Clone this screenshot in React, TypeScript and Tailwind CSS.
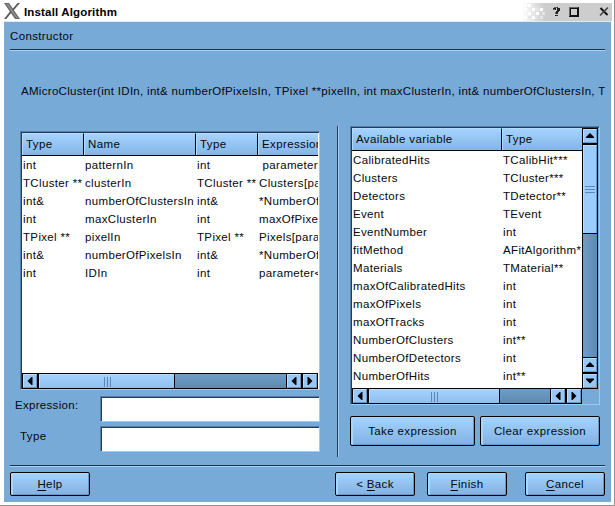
import React from "react";

type Dir = "left" | "right" | "up" | "down";

const SHAPES: Record<Dir, string> = {
  left: "M5 7.5 L9 3.5 H10 V11.5 H9 Z",
  right: "M10 7.5 L6 3.5 H5 V11.5 H6 Z",
  up: "M7.5 4.5 L11.5 8.5 V9.5 H3.5 V8.5 Z",
  down: "M7.5 10 L11.5 6 V5 H3.5 V6 Z",
};

function Arrow({ dir }: { dir: Dir }) {
  return (
    <div className="h-[14px] w-[14px] shrink-0 border border-t-[#b9dcff] border-l-[#b9dcff] border-r-[#6b98c3] border-b-[#6b98c3] bg-[#98c8f8]">
      <svg viewBox="1.5 1.5 12 12" className="block h-[12px] w-[12px]">
        <path d={SHAPES[dir]} fill="#000" />
      </svg>
    </div>
  );
}

function Head({ label, className }: { label: string; className: string }) {
  return (
    <div
      className={
        "h-[22px] shrink-0 overflow-hidden border-t border-l border-[#b4dbff] bg-linear-to-b from-[#a5d3ff] to-[#84b5e6] pl-[3px] leading-[21px] tracking-[0.37px] " +
        className
      }
    >
      {label}
    </div>
  );
}

function Grip({ vertical = false }: { vertical?: boolean }) {
  return vertical ? (
    <div className="flex h-[7px] w-[10px] flex-col justify-between">
      <i className="h-px bg-[#5c88b5]" />
      <i className="h-px bg-[#5c88b5]" />
      <i className="h-px bg-[#5c88b5]" />
    </div>
  ) : (
    <div className="flex h-[10px] w-[7px] justify-between">
      <i className="w-px bg-[#5c88b5]" />
      <i className="w-px bg-[#5c88b5]" />
      <i className="w-px bg-[#5c88b5]" />
    </div>
  );
}

function HBar({ thumb }: { thumb: string }) {
  return (
    <div className="flex h-[16px] shrink-0 border border-black bg-linear-to-b from-[#709dc6] to-[#5e8ab1]">
      <Arrow dir="left" />
      <div className="w-[2px] bg-black" />
      <div
        className={
          "flex h-[14px] items-center justify-center border-t border-l border-[#b9dcff] bg-linear-to-b from-[#a3d2ff] to-[#8fbfef] " +
          thumb
        }
      >
        <Grip />
      </div>
      <div className="w-px bg-black" />
      <div className="ml-auto w-px bg-black" />
      <Arrow dir="left" />
      <div className="w-[2px] bg-black" />
      <Arrow dir="right" />
    </div>
  );
}

function Button({ children, className }: { children: React.ReactNode; className: string }) {
  return (
    <button
      className={
        "shrink-0 rounded-[2px] border border-black bg-linear-to-b from-[#a5d3ff] to-[#81b2e3] pt-[2px] text-center tracking-[0.37px] shadow-[inset_2px_1px_0_#a9d6ff,inset_-1px_-1px_0_#6997c3] " +
        className
      }
    >
      {children}
    </button>
  );
}

const ARGS = [
  ["int", "patternIn", "int", "\u00a0parameter"],
  ["TCluster **", "clusterIn", "TCluster **", "Clusters[parameter"],
  ["int&", "numberOfClustersIn", "int&", "*NumberOfClusters"],
  ["int", "maxClusterIn", "int", "maxOfPixels"],
  ["TPixel **", "pixelIn", "TPixel **", "Pixels[parameter"],
  ["int&", "numberOfPixelsIn", "int&", "*NumberOfPixels"],
  ["int", "IDIn", "int", "parameter<"],
];

const VARS = [
  ["CalibratedHits", "TCalibHit***"],
  ["Clusters", "TCluster***"],
  ["Detectors", "TDetector**"],
  ["Event", "TEvent"],
  ["EventNumber", "int"],
  ["fitMethod", "AFitAlgorithm*"],
  ["Materials", "TMaterial**"],
  ["maxOfCalibratedHits", "int"],
  ["maxOfPixels", "int"],
  ["maxOfTracks", "int"],
  ["NumberOfClusters", "int**"],
  ["NumberOfDetectors", "int"],
  ["NumberOfHits", "int**"],
];

const FRAME =
  "flex flex-col border border-t-[#547da7] border-l-[#547da7] border-r-[#9bcbfa] border-b-[#9bcbfa]";
const INNER = "border-t border-l border-[#263d55] bg-white";

function TitleBar() {
  return (
    <header className="flex h-[21px] shrink-0 items-start pl-[4px]">
      <svg viewBox="0 0 16 16" className="mt-[3px] h-[16px] w-[16px] shrink-0">
        <path d="M0 0 H5 L16 16 H11 Z" fill="#666" />
        <path d="M2 1 H4.3 L14 15 H12 Z" fill="#8c8c8c" />
        <path d="M13.5 0 H16 L9.6 7.4 L8.5 6 Z M6.3 8 L7.5 9.6 L2.3 16 H0 Z" fill="#5c5c5c" />
      </svg>
      <h1 className="mt-[4px] ml-[4px] text-[11.5px] leading-[16px] font-bold tracking-[0.16px] whitespace-nowrap text-black">
        Install Algorithm
      </h1>
      <div className="mt-[3px] mr-[2px] ml-auto flex h-[18px] w-[90px] items-center bg-linear-to-r from-white via-[#cdcdcd] via-25% to-[#cdcdcd]">
        <svg viewBox="0 0 24 18" className="h-[18px] w-[24px] shrink-0">
          <path
            d="M2 1h3v3h-3z M6 1h3v3h-3z M2 5h3v3h-3z M10 5h3v3h-3z M6 9h3v3h-3z M14 9h3v3h-3z M2 13h3v3h-3z M10 13h3v3h-3z M18 5h3v3h-3z"
            fill="#fff"
          />
          <path d="M14 5h3v3h-3z M6 13h3v3h-3z M18 13h3v3h-3z M20 9h3v3h-3z M10 9h3v3h-3z" fill="#e6e6e6" />
        </svg>
        <svg viewBox="0 0 66 18" className="h-[18px] w-[66px] shrink-0" fill="none" shapeRendering="crispEdges">
          <g transform="translate(1 0)">
            <path d="M7 4h4v1h-4z M6 5h3v2h-3z M10 5h3v3h-3z M9 8h3v1h-3z M8 9h3v2h-3z M8 12h3v1h-3z" fill="#222" />
            <path d="M7 4h3v1h-3z M6 6h2v1h-2z M8 9h1v2h-1z" fill="#666" />
            <path d="M22 4h10v10h-10z M24 6v6h6v-6z" fill="#111" fillRule="evenodd" />
            <path d="M22 4h9v1h-9z M22 4h1v9h-1z" fill="#666" />
            <path d="M53.5 5 L60.5 12" stroke="#111" strokeWidth="2" shapeRendering="auto" />
            <path d="M61 4.5 L53 12.5" stroke="#444" strokeWidth="1.6" shapeRendering="auto" />
          </g>
        </svg>
      </div>
    </header>
  );
}

export default function App() {
  return (
    <div className="flex h-[506px] w-[615px] flex-col overflow-hidden border-r border-b border-[#929292] bg-white font-['Liberation_Sans',Arial,sans-serif] text-[11.5px] tracking-[0.34px] text-[#05080c]">
      <TitleBar />
      <main className="mr-[3px] mb-[3px] ml-[4px] flex min-h-0 flex-1 flex-col border-t border-[#dcebf8] bg-[#78aad8] pr-[6px] pl-[6px]">
        <div className="h-[27px] shrink-0 leading-[28px] tracking-[0.36px]">Constructor</div>
        <div className="h-[2px] shrink-0 border-t border-b border-t-[#1d3045] border-b-[#a6d2fc]" />
        <div className="mt-[31px] ml-[11px] h-[18px] shrink-0 overflow-hidden leading-[18px] tracking-[0.3px] whitespace-nowrap">
          AMicroCluster(int IDIn, int&amp; numberOfPixelsIn, TPixel **pixelIn, int maxClusterIn, int&amp; numberOfClustersIn, TCluster
        </div>

        <div className="mt-[26px] flex h-[332px] shrink-0">
          <section className="flex w-[310px] shrink-0 flex-col pt-[5px]">
            <div className={FRAME + " ml-[10px] h-[259px] w-[300px] shrink-0"}>
              <div className={INNER + " flex min-h-0 flex-1 flex-col overflow-hidden pr-px whitespace-nowrap"}>
                <div className="flex overflow-hidden border-b border-black">
                  <Head label="Type" className="w-[62px] border-r border-r-black" />
                  <Head label="Name" className="w-[112px] border-r border-r-black" />
                  <Head label="Type" className="w-[62px] border-r border-r-black" />
                  <Head label="Expression" className="w-[61px]" />
                </div>
                <div className="min-h-0 flex-1 overflow-hidden pl-px">
                  {ARGS.map((r, i) => (
                    <div key={i} className="flex h-[18px] leading-[19px]">
                      <div className="w-[62px] shrink-0">{r[0]}</div>
                      <div className="w-[112px] shrink-0">{r[1]}</div>
                      <div className="w-[62px] shrink-0">{r[2]}</div>
                      <div className="w-[59px] shrink-0 overflow-hidden">{r[3]}</div>
                    </div>
                  ))}
                </div>
                <HBar thumb="w-[135px]" />
              </div>
            </div>
            {["Expression:", "Type"].map((label, i) => (
              <label
                key={label}
                className={i === 0 ? "mt-[6px] flex h-[25px] items-start" : "mt-[5px] flex h-[25px] items-start"}
              >
                <span
                  className={
                    i === 0
                      ? "w-[90px] pl-[5px] leading-[18px] tracking-[0.3px]"
                      : "w-[90px] pl-[10px] leading-[20px] tracking-[0.37px]"
                  }
                >
                  {label}
                </span>
                <span className={FRAME + " h-[26px] w-[220px]"}>
                  <span className={INNER + " block flex-1"} />
                </span>
              </label>
            ))}
          </section>

          <div className="ml-[17px] h-[331px] w-[2px] shrink-0 border-r border-l border-r-[#9bcbfa] border-l-[#263d55]" />

          <section className="ml-[11px] w-[251px] shrink-0">
            <div className={FRAME + " h-[279px] w-[250px]"}>
              <div className={INNER + " flex min-h-0 flex-1"}>
                <div className="flex w-[230px] shrink-0 flex-col overflow-hidden whitespace-nowrap">
                  <div className="flex shrink-0 border-b border-black">
                    <Head label="Available variable" className="w-[150px] border-r border-r-black" />
                    <Head label="Type" className="w-[80px]" />
                  </div>
                  <div className="min-h-0 flex-1 overflow-hidden pl-px">
                    {VARS.map((r) => (
                      <div key={r[0]} className="flex h-[18px] leading-[18px]">
                        <div className="w-[150px] shrink-0">{r[0]}</div>
                        <div>{r[1]}</div>
                      </div>
                    ))}
                  </div>
                  <HBar thumb="w-[130px]" />
                </div>
                <div className="flex w-[17px] flex-col bg-[#78aad8]">
                  <div className="flex h-[261px] w-[16px] flex-col border border-black bg-linear-to-r from-[#709dc6] to-[#5e8ab1]">
                    <Arrow dir="up" />
                    <div className="h-[2px] shrink-0 bg-black" />
                    <div className="flex h-[88px] shrink-0 items-center justify-center border-t border-r border-l border-t-[#b9dcff] border-r-[#6b98c3] border-l-[#b9dcff] bg-[#9bccfc]">
                      <Grip vertical />
                    </div>
                    <div className="h-px shrink-0 bg-black" />
                    <div className="mt-auto h-px shrink-0 bg-black" />
                    <Arrow dir="up" />
                    <div className="h-[2px] shrink-0 bg-black" />
                    <Arrow dir="down" />
                  </div>
                </div>
              </div>
            </div>
            <div className="mt-[11px] flex gap-[5px]">
              <Button className="h-[30px] w-[125px]">Take expression</Button>
              <Button className="h-[30px] w-[120px]">Clear expression</Button>
            </div>
          </section>
        </div>

        <div className="mt-[7px] h-[2px] shrink-0 border-t border-b border-t-[#1d3045] border-b-[#a6d2fc]" />
        <footer className="mt-[5px] flex">
          <Button className="h-[24px] w-[80px]">
            <u className="underline-offset-2">H</u>elp
          </Button>
          <Button className="ml-[245px] h-[24px] w-[80px]">
            &lt; <u className="underline-offset-2">B</u>ack
          </Button>
          <Button className="ml-[12px] h-[24px] w-[80px]">
            <u className="underline-offset-2">F</u>inish
          </Button>
          <Button className="ml-[18px] h-[24px] w-[80px]">
            <u className="underline-offset-2">C</u>ancel
          </Button>
        </footer>
      </main>
    </div>
  );
}
